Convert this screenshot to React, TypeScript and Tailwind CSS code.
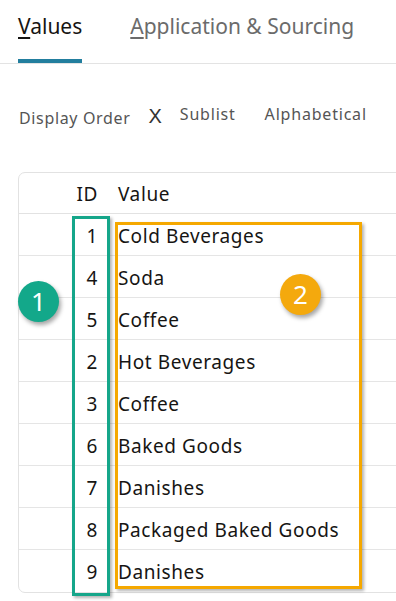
import React from 'react';

const rows: [number, string][] = [
  [1, 'Cold Beverages'],
  [4, 'Soda'],
  [5, 'Coffee'],
  [2, 'Hot Beverages'],
  [3, 'Coffee'],
  [6, 'Baked Goods'],
  [7, 'Danishes'],
  [8, 'Packaged Baked Goods'],
  [9, 'Danishes'],
];

export default function App() {
  return (
    <div
      className="relative w-[396px] h-[601px] bg-white overflow-hidden"
      style={{ fontFamily: '"Noto Sans", "Open Sans", sans-serif' }}
    >
      {/* Tabs */}
      <div className="flex h-[64px] border-b border-[#e3e3e3] pl-[18px] gap-[48px]">
        <div className="relative pt-[12px] text-[21px] leading-[28px] text-[#161513]">
          <span className="underline underline-offset-[3px] decoration-[2px]">V</span>alues
          <div className="absolute left-0 right-0 bottom-0 h-[4px] bg-[#227e9e]" />
        </div>
        <div className="relative pt-[12px] text-[21px] leading-[28px] text-[#6b6b6b]">
          <span className="underline underline-offset-[3px] decoration-[2px]">A</span>pplication &amp; Sourcing
        </div>
      </div>

      {/* Sort options */}
      <div className="flex items-start h-[108px] pl-[19px] pt-[39px]">
        <span className="mt-[4px] text-[16px] leading-[22px] tracking-[0.65px] text-[#555]">Display Order</span>
        <span
          className="ml-[18px] mt-[2px] text-[20px] leading-[22px] text-[#333]"
          style={{ fontFamily: '"Liberation Sans", Arial, sans-serif', fontWeight: 300 }}
        >
          X
        </span>
        <span className="ml-[18px] text-[16px] leading-[22px] tracking-[0.8px] text-[#555]">Sublist</span>
        <span className="ml-[29px] text-[16px] leading-[22px] tracking-[0.8px] text-[#555]">Alphabetical</span>
      </div>

      {/* Table card */}
      <div className="ml-[18px] w-[400px] border border-[#e2e2e2] rounded-l-[7px] text-[19px] tracking-[0.6px] text-[#161513]">
        <div className="flex items-center h-[41px] pt-[3px] border-b border-[#e2e2e2]">
          <div className="w-[53px]" />
          <div className="w-[26px] text-right">ID</div>
          <div className="ml-[20px]">Value</div>
        </div>
        {rows.map(([id, v], i) => (
          <div
            key={i}
            className={`flex items-center h-[42px] pt-[3px] ${i < rows.length - 1 ? 'border-b border-[#e5e5e5]' : ''}`}
          >
            <div className="w-[53px]" />
            <div className="w-[26px] text-right">{id}</div>
            <div className="ml-[20px]">{v}</div>
          </div>
        ))}
      </div>

      {/* Annotation overlays */}
      <div className="absolute left-[72px] top-[216px] w-[38px] h-[380px] border-[3px] border-[#15a68a] shadow-[2px_2px_3px_rgba(0,0,0,0.3)]" />
      <div className="absolute left-[115px] top-[222px] w-[247px] h-[367px] border-[3px] border-[#f5a800] shadow-[2px_2px_3px_rgba(0,0,0,0.3)]" />
      <div className="absolute left-[18px] top-[281px] w-[41px] h-[41px] rounded-full bg-[#13a88a] shadow-[2px_3px_4px_rgba(0,0,0,0.35)] flex items-center justify-center text-white text-[26px]">
        1
      </div>
      <div className="absolute left-[280px] top-[274px] w-[41px] h-[41px] rounded-full bg-[#f4a90d] shadow-[2px_3px_4px_rgba(0,0,0,0.35)] flex items-center justify-center text-white text-[26px]">
        2
      </div>
    </div>
  );
}
